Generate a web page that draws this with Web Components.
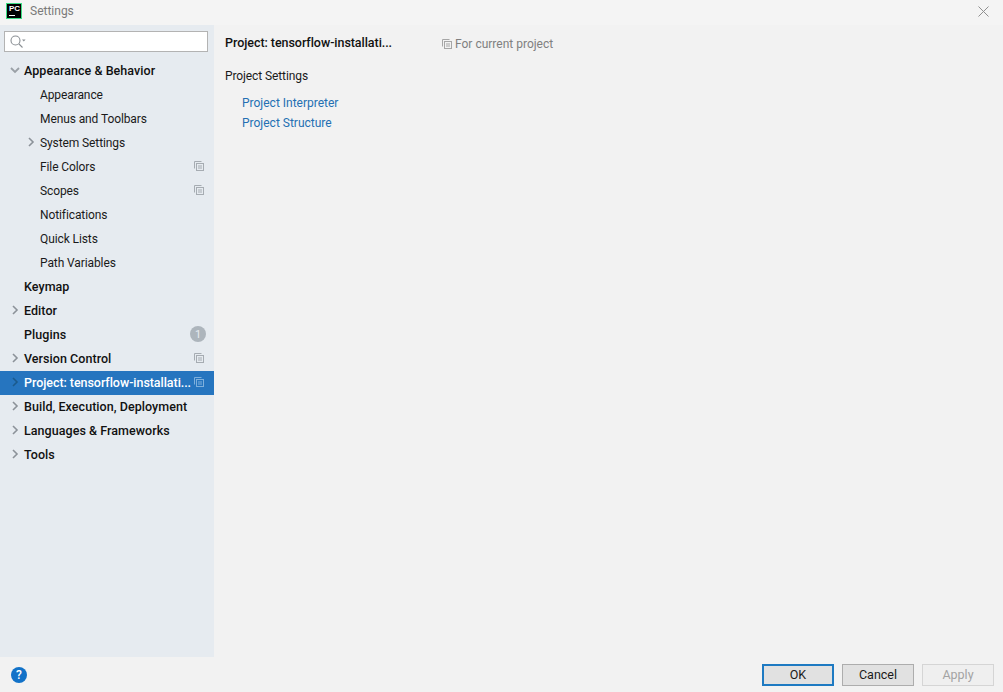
<!DOCTYPE html>
<html>
<head>
<meta charset="utf-8">
<title>Settings</title>
<style>
  html, body { margin: 0; height: 100%; }
  body { background: #f2f2f2; font: 12px Roboto, sans-serif; color: #1a1a1a; overflow: hidden; }
</style>
</head>
<body>
<settings-dialog>
  <tree-row slot="tree" level="0" arrow="open" bold>Appearance &amp; Behavior</tree-row>
  <tree-row slot="tree" level="1">Appearance</tree-row>
  <tree-row slot="tree" level="1">Menus and Toolbars</tree-row>
  <tree-row slot="tree" level="1" arrow="closed">System Settings</tree-row>
  <tree-row slot="tree" level="1" copy>File Colors</tree-row>
  <tree-row slot="tree" level="1" copy>Scopes</tree-row>
  <tree-row slot="tree" level="1">Notifications</tree-row>
  <tree-row slot="tree" level="1">Quick Lists</tree-row>
  <tree-row slot="tree" level="1">Path Variables</tree-row>
  <tree-row slot="tree" level="0" bold>Keymap</tree-row>
  <tree-row slot="tree" level="0" arrow="closed" bold>Editor</tree-row>
  <tree-row slot="tree" level="0" bold badge="1">Plugins</tree-row>
  <tree-row slot="tree" level="0" arrow="closed" bold copy>Version Control</tree-row>
  <tree-row slot="tree" level="0" arrow="closed" bold copy selected>Project: tensorflow-installati...</tree-row>
  <tree-row slot="tree" level="0" arrow="closed" bold>Build, Execution, Deployment</tree-row>
  <tree-row slot="tree" level="0" arrow="closed" bold>Languages &amp; Frameworks</tree-row>
  <tree-row slot="tree" level="0" arrow="closed" bold>Tools</tree-row>

  <project-pane slot="main"></project-pane>

  <dialog-button slot="buttons" kind="default">OK</dialog-button>
  <dialog-button slot="buttons">Cancel</dialog-button>
  <dialog-button slot="buttons" kind="disabled">Apply</dialog-button>
</settings-dialog>

<script>
// little stacked-pages icon used in the tree and next to "For current project"
const copyIcon = (color) => `
  <svg width="10" height="10" viewBox="0 0 10 10" fill="none" stroke="${color}" stroke-width="1">
    <path d="M7.5 .5H.5V7.5"/>
    <rect x="2.5" y="2.5" width="7" height="7" fill="none"/>
    <path d="M4 5H8M4 7H8"/>
  </svg>`;

class SearchBox extends HTMLElement {
  constructor() {
    super();
    this.attachShadow({ mode: "open" }).innerHTML = `
      <style>
        :host { display: flex; align-items: center; height: 21px; box-sizing: border-box;
                background: #fff; border: 1px solid #b3b3b3; padding-left: 5px; }
      </style>
      <svg width="16" height="14" viewBox="0 0 16 14" fill="none" stroke="#8a8f94" stroke-width="1.1">
        <circle cx="5.5" cy="5.5" r="4.5"/>
        <path d="M9 9l3.5 3.5"/>
        <path d="M12 4.5h3.6L13.8 6.6z" fill="#8a8f94" stroke="none"/>
      </svg>`;
  }
}
customElements.define("search-box", SearchBox);

class TreeRow extends HTMLElement {
  constructor() {
    super();
    const level = Number(this.getAttribute("level"));
    const arrow = this.getAttribute("arrow");
    const selected = this.hasAttribute("selected");
    const badge = this.getAttribute("badge");
    let arrowSvg = "";
    if (arrow === "open") {
      arrowSvg = `<path d="M1 3L5 7L9 3" stroke="#9aa0a6" stroke-width="1.8" fill="none"/>`;
    } else if (arrow === "closed") {
      const c = selected ? "#1b5a8c" : "#8c9299";
      arrowSvg = `<path d="M3 1L7 5L3 9" stroke="${c}" stroke-width="1.6" fill="none"/>`;
    }
    this.attachShadow({ mode: "open" }).innerHTML = `
      <style>
        :host { display: flex; align-items: center; height: 24px; position: relative;
                padding-left: ${level ? 40 : 24}px; padding-right: 10px; letter-spacing: -0.1px; }
        :host([bold]) { font-size: 12.5px; font-weight: 500; color: #111; letter-spacing: 0.05px; }
        :host([selected]) { background: #2675bf; color: #fff; letter-spacing: -0.05px; }
        .arrow { position: absolute; left: ${level ? 26 : 10}px; top: 6px; width: 10px; height: 10px; }
        .label { flex: 1; min-width: 0; white-space: nowrap; padding-bottom: 1px; }
        .badge { width: 16px; height: 16px; border-radius: 50%; background: #adb5bc; color: #e6ebf0;
                 font-size: 11px; font-weight: 400; display: flex; align-items: center; justify-content: center;
                 margin-right: -2px; margin-top: -2px; }
        svg.copy { display: block; margin-top: -2px; }
      </style>
      <svg class="arrow" viewBox="0 0 10 10">${arrowSvg}</svg>
      <span class="label"><slot></slot></span>
      ${this.hasAttribute("copy") ? copyIcon(selected ? "#7fb0dc" : "#a6acb2").replace("<svg", '<svg class="copy"') : ""}
      ${badge ? `<span class="badge">${badge}</span>` : ""}`;
  }
}
customElements.define("tree-row", TreeRow);

class DialogButton extends HTMLElement {
  constructor() {
    super();
    this.attachShadow({ mode: "open" }).innerHTML = `
      <style>
        :host { display: flex; align-items: center; justify-content: center; width: 72px; height: 22px;
                box-sizing: border-box; background: #e1e1e1; border: 1px solid #adadad; color: #1a1a1a;
                font-size: 12.5px; }
        :host([kind="default"]) { border: 2px solid #1e7ac2; }
        :host([kind="disabled"]) { background: #efefef; border-color: #d5d5d5; color: #a3a3a3; }
      </style>
      <slot></slot>`;
  }
}
customElements.define("dialog-button", DialogButton);

class ProjectPane extends HTMLElement {
  constructor() {
    super();
    this.attachShadow({ mode: "open" }).innerHTML = `
      <style>
        :host { display: block; padding: 10px 11px; }
        .head { display: flex; align-items: center; height: 17px; }
        h1 { margin: 0 0 2px; font-size: 12.5px; font-weight: 500; color: #111; width: 217px; white-space: nowrap; letter-spacing: -0.05px; }
        .scope { display: flex; align-items: center; gap: 3px; color: #808080; padding-top: 1px; }
        h2 { margin: 16px 0 0; font-size: 12px; font-weight: 400; color: #1a1a1a; height: 17px; line-height: 17px; letter-spacing: -0.1px; }
        .links { display: flex; flex-direction: column; gap: 3px; margin: 10px 0 0 17px; }
        a { color: #2470b3; text-decoration: none; height: 17px; line-height: 17px; }
      </style>
      <div class="head">
        <h1>Project: tensorflow-installati...</h1>
        <span class="scope">${copyIcon("#a6a6a6")}For current project</span>
      </div>
      <h2>Project Settings</h2>
      <div class="links">
        <a href="#">Project Interpreter</a>
        <a href="#">Project Structure</a>
      </div>`;
  }
}
customElements.define("project-pane", ProjectPane);

class SettingsDialog extends HTMLElement {
  constructor() {
    super();
    this.attachShadow({ mode: "open" }).innerHTML = `
      <style>
        :host { display: flex; flex-direction: column; height: 692px; width: 1003px; }
        .title { display: flex; align-items: center; height: 25px; flex: none; padding: 0 0 3px 6px; box-sizing: border-box; gap: 8px;
                 background: #f4f4f4; color: #7a7a7a; font-size: 12px; }
        .logo { width: 16px; height: 16px; background: #000; border: 1px solid #3ddc84; box-sizing: border-box;
                color: #fff; font: 700 8px/8px "Liberation Sans", sans-serif; padding: 1px 0 0 2px; position: relative; }
        .logo i { position: absolute; left: 2px; bottom: 2px; width: 6px; height: 1px; background: #fff; }
        .close { margin-left: auto; margin-right: 14px; display: block; }
        .body { flex: 1; display: flex; min-height: 0; }
        .side { width: 214px; flex: none; background: #e6ebf0; display: flex; flex-direction: column; }
        .search { padding: 6px 6px 0 4px; height: 34px; box-sizing: border-box; }
        .main { flex: 1; }
        .foot { height: 35px; flex: none; display: flex; align-items: center; }
        .help { width: 16px; height: 16px; border-radius: 50%; background: #1272c8; color: #fff; margin-left: 11px;
                font-size: 12px; font-weight: 500; display: flex; align-items: center; justify-content: center; }
        .buttons { margin-left: auto; margin-right: 9px; display: flex; gap: 8px; }
      </style>
      <div class="title">
        <div class="logo">PC<i></i></div>
        <span>Settings</span>
        <svg class="close" width="11" height="11" viewBox="0 0 11 11" stroke="#8f8f8f" stroke-width="1"><path d="M.5 .5L10.5 10.5M10.5 .5L.5 10.5"/></svg>
      </div>
      <div class="body">
        <div class="side">
          <div class="search"><search-box></search-box></div>
          <slot name="tree"></slot>
        </div>
        <div class="main"><slot name="main"></slot></div>
      </div>
      <div class="foot">
        <div class="help">?</div>
        <div class="buttons"><slot name="buttons"></slot></div>
      </div>`;
  }
}
customElements.define("settings-dialog", SettingsDialog);
</script>
</body>
</html>
